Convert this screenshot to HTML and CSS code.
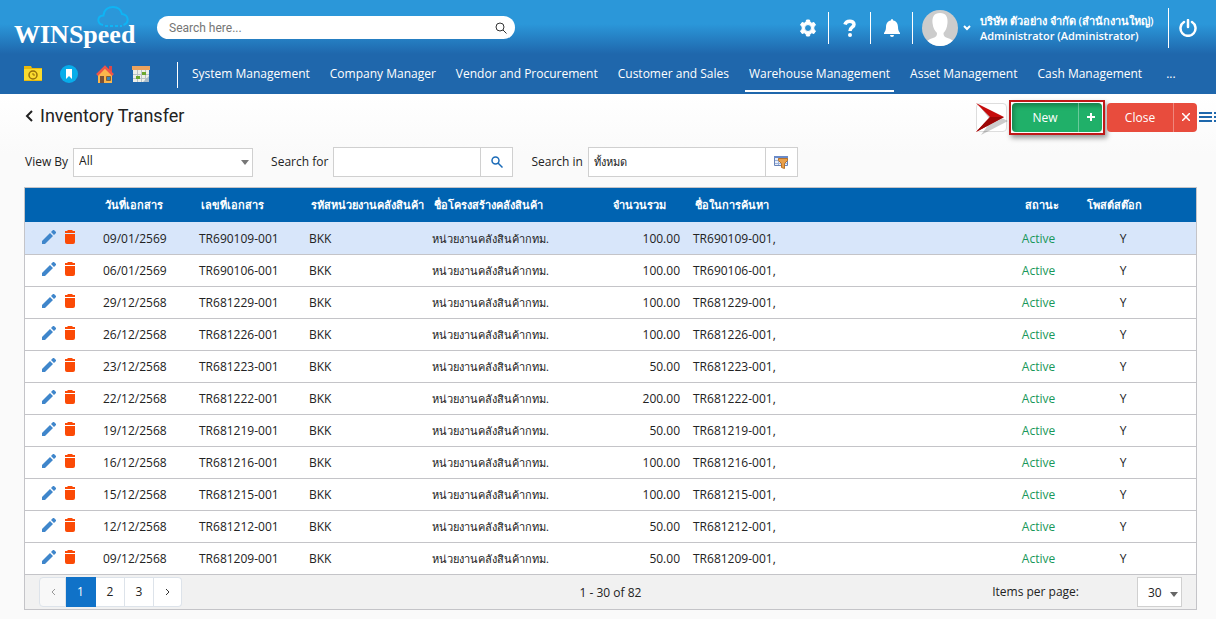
FILE: index.html
```html
<!DOCTYPE html>
<html lang="en">
<head>
<meta charset="utf-8">
<title>WINSpeed - Inventory Transfer</title>
<link rel="stylesheet" href="styles.css">
</head>
<body>
<svg class="sprite" aria-hidden="true">
  <symbol id="pencil" viewBox="0 0 14 14"><path d="M0 11 8 3l3 3-8 8H0zM9 2l2-2h1l2 2v1l-2 2z"/></symbol>
  <symbol id="trash" viewBox="0 0 12 14"><path d="M1 4h10v8q0 2-2 2H3q-2 0-2-2zM1 1h2l1-1h4l1 1h2v2H1z"/></symbol>
</svg>
<header class="top">
  <div class="bar">
    <a class="logo" href="#">
      <span>WINSpeed</span>
      <svg class="cloud" viewBox="0 0 32 22" fill="none" stroke="#0fb4f4" stroke-width="2"><path d="M6 19C0 18-.5 10 6.500 9.500 7 3 12 1 16 1c5 0 8 3 9 7 7 1 7.500 9 1.500 11"/><path d="M8 20h17" stroke-dasharray="3 2"/></svg>
    </a>
    <form class="search">
      <input type="search" placeholder="Search here..." aria-label="Search">
      <button type="button" aria-label="Search"><svg width="12" height="12" viewBox="0 0 12 12" fill="none" stroke="#333"><circle cx="5" cy="5" r="4"/><path d="m8 8 3.500 3.500"/></svg></button>
    </form>
    <div class="tools">
      <button class="tool" aria-label="Settings"><svg width="18" height="18" viewBox="0 0 18 18"><path fill="#fff" fill-rule="evenodd" stroke="#fff" stroke-linejoin="round" d="M7.500 1h3l.5 2.200 1.800 1 2.200-.7 1.500 2.600-1.700 1.600v2.600l1.700 1.600-1.500 2.600-2.200-.7-1.800 1-.5 2.200h-3L7 14.800l-1.800-1-2.200.7-1.500-2.600 1.700-1.600V7.700L1.500 6.100 3 3.500l2.200.7 1.800-1zM9 5.500a3.500 3.500 0 1 0 0 7 3.500 3.500 0 0 0 0-7z"/></svg></button>
      <button class="tool" aria-label="Help"><svg width="14" height="18" viewBox="0 0 14 18"><path fill="none" stroke="#fff" stroke-width="3.500" d="M2 5.500C3 1 11 1 11 5.500 11 8.500 7 8 7 12"/><circle cx="7" cy="16" r="2" fill="#fff"/></svg></button>
      <button class="tool" aria-label="Notifications"><svg width="16" height="18" viewBox="0 0 16 18" fill="#fff"><path d="M8 0q1.200 0 1.200 1.500C12.500 2 14 5 14 8c0 3 .8 4.500 2 6v1H0v-1c1.200-1.500 2-3 2-6 0-3 1.500-6 4.800-6.500Q6.800 0 8 0zM6 16h4q0 2-2 2t-2-2z"/></svg></button>
      <button class="user">
        <svg width="36" height="36" viewBox="0 0 36 36"><defs><clipPath id="round"><circle cx="18" cy="18" r="18"/></clipPath></defs><g clip-path="url(#round)"><path fill="#ccc" d="M0 0h36v36H0z"/><path fill="#fff" d="M18 3c6 0 8 4 7.500 10-.5 5-2 8-4 10 0 3 1 4 4 5 4 1 7 3 8 8H3c1-5 4-7 8-8 3-1 4-2 4-5-2-2-4-5-4.500-10C10 7 12 3 18 3z"/></g></svg>
        <svg width="8" height="6" viewBox="0 0 8 6" fill="none" stroke="#fff" stroke-width="2"><path d="m1 1 3 3 3-3"/></svg>
        <span class="who"><span class="thai">บริษัท ตัวอย่าง จำกัด (สำนักงานใหญ่)</span><span>Administrator (Administrator)</span></span>
      </button>
      <button class="power" aria-label="Log out"><svg width="18" height="18" viewBox="0 0 18 18" fill="none" stroke="#fff" stroke-width="2.500" stroke-linecap="round"><path d="M5 3a7.500 7.500 0 1 0 8 0M9 1v7"/></svg></button>
    </div>
  </div>
  <nav class="menu">
    <div class="quick">
      <a href="#" aria-label="Recent"><svg width="18" height="18" viewBox="0 0 18 18"><path fill="#e8b90c" d="M0 1h7l1 2h10v13H0z"/><path fill="#fadb2e" d="M0 4h18v11H0z"/><circle cx="9" cy="10" r="4" fill="none" stroke="#96700b" stroke-width="1.500"/><path d="M9 8v2h2" fill="none" stroke="#96700b"/></svg></a>
      <a href="#" aria-label="Bookmarks"><svg width="18" height="18" viewBox="0 0 18 18"><circle cx="9" cy="9" r="9" fill="#08adea"/><path fill="#fff" d="M6 4h6v10l-3-3-3 3z"/></svg></a>
      <a href="#" aria-label="Home"><svg width="18" height="18" viewBox="0 0 18 18"><path fill="#d9474a" d="M13 1h3v6h-3z"/><path fill="#fbb64b" d="M2 9l7-7 7 7v9H2z"/><path fill="none" stroke="#ee5548" stroke-width="2.500" d="m1 10 8-8 8 8"/><path fill="#7a5136" d="M4 11h4v7H4z"/><path fill="#3b82b4" stroke="#865f35" d="M10.500 11.500h4v4h-4z"/></svg></a>
      <a href="#" aria-label="Calendar"><svg width="18" height="18" viewBox="0 0 18 18"><path fill="#eef0e8" d="M1 1h16v16H1z"/><path fill="#eba35f" d="M0 1h18v4H0z"/><path stroke="#b9c3c6" d="M1 9.500h16M1 13.500h16M5.500 5v12M9.500 5v12M13.500 5v12"/><path fill="#6aa72e" d="M10 7h4v3h-4zM4 11h4v3H4z"/><path fill="#a9bccb" d="m11 17 6-6v6z"/></svg></a>
    </div>
    <ul class="links">
      <li><a href="#">System Management</a></li>
      <li><a href="#">Company Manager</a></li>
      <li><a href="#">Vendor and Procurement</a></li>
      <li><a href="#">Customer and Sales</a></li>
      <li><a class="active" href="#">Warehouse Management</a></li>
      <li><a href="#">Asset Management</a></li>
      <li><a href="#">Cash Management</a></li>
      <li><a href="#">...</a></li>
    </ul>
  </nav>
</header>
<main>
  <div class="head">
    <h1><svg width="8" height="12" viewBox="0 0 8 12" fill="none" stroke="#222" stroke-width="2"><path d="M7 1 2 6l5 5"/></svg>Inventory Transfer</h1>
    <div class="actions">
      <span class="slot"><svg class="pointer" width="36" height="38" viewBox="0 0 36 38"><path fill="#000" opacity=".2" d="m6 7 27 13L6 34l10-14z"/><path fill="#c60c0c" d="m1 2 28 14L1 31l14-15z"/><path fill="#9c0606" d="m1 31 28-15H15z"/></svg></span>
      <span class="frame"><button class="btn new"><span>New</span><span class="sign"><svg width="8" height="8" viewBox="0 0 8 8" stroke="#fff" stroke-width="2"><path d="M0 4h8M4 0v8"/></svg></span></button></span>
      <button class="btn close"><span>Close</span><span class="sign"><svg width="8" height="8" viewBox="0 0 8 8" stroke="#fff" stroke-width="1.500"><path d="m0 0 8 8M8 0 0 8"/></svg></span></button>
      <button class="more" aria-label="Panel"><svg width="17" height="10" viewBox="0 0 17 10" stroke="#1d67ac" stroke-width="2"><path d="M0 1h13M0 5h13M0 9h13M15 1h2M15 5h2M15 9h2"/></svg></button>
    </div>
  </div>
  <div class="filters">
    <label for="view">View By</label>
    <span class="pick view"><select id="view"><option>All</option></select><svg width="8" height="5" viewBox="0 0 8 5" fill="#777"><path d="M0 0h8L4 5z"/></svg></span>
    <label for="for">Search for</label>
    <span class="combo"><input id="for" class="for"><button aria-label="Find"><svg width="12" height="12" viewBox="0 0 12 12" fill="none" stroke="#1b6bb8" stroke-width="1.500"><circle cx="4.500" cy="4.500" r="3.500"/><path d="m7 7 4.500 4.500"/></svg></button></span>
    <label for="in">Search in</label>
    <span class="combo"><input id="in" class="in thai" value="ทั้งหมด"><button aria-label="Choose fields"><svg width="14" height="14" viewBox="0 0 14 14"><path fill="#e8eef8" stroke="#6682b8" d="M.5 1.500h13v9H.5z"/><path fill="#6a8bc9" d="M0 1h14v2H0z"/><path stroke="#9db1d8" d="M1 5.500h12M1 8.500h12M4.500 3v7"/><path fill="#e9a04a" stroke="#b8722a" d="M4.500 3.500h9v2l-3 3v5l-3-1v-4l-3-3z"/></svg></button></span>
  </div>
  <section class="grid">
    <table>
      <colgroup><col class="c-tool"><col class="c-date"><col class="c-no"><col class="c-code"><col class="c-name"><col class="c-sum"><col><col class="c-status"><col class="c-post"><col class="c-end"></colgroup>
      <thead><tr><th></th><th>วันที่เอกสาร</th><th>เลขที่เอกสาร</th><th>รหัสหน่วยงานคลังสินค้า</th><th>ชื่อโครงสร้างคลังสินค้า</th><th class="h-sum">จำนวนรวม</th><th>ชื่อในการค้นหา</th><th class="h-status">สถานะ</th><th>โพสต์สต๊อก</th><th></th></tr></thead>
      <tbody id="rows"></tbody>
    </table>
    <footer class="foot">
      <div class="pager">
        <button disabled aria-label="Previous"><svg width="4" height="6" viewBox="0 0 4 6" fill="none" stroke="#999"><path d="M4 0 1 3l3 3"/></svg></button><button class="on">1</button><button>2</button><button>3</button><button aria-label="Next"><svg width="4" height="6" viewBox="0 0 4 6" fill="none" stroke="#333"><path d="m0 0 3 3-3 3"/></svg></button>
      </div>
      <span class="count">1 - 30 of 82</span>
      <div class="size"><label for="size">Items per page:</label><span class="pick"><select id="size"><option>30</option></select><svg width="8" height="5" viewBox="0 0 8 5" fill="#666"><path d="M0 0h8L4 5z"/></svg></span></div>
    </footer>
  </section>
</main>
<script src="rows.js"></script>
</body>
</html>
```
FILE: rows.js
```js
const rows = [
  ['09/01/2569', 'TR690109-001', '100.00'],
  ['06/01/2569', 'TR690106-001', '100.00'],
  ['29/12/2568', 'TR681229-001', '100.00'],
  ['26/12/2568', 'TR681226-001', '100.00'],
  ['23/12/2568', 'TR681223-001', '50.00'],
  ['22/12/2568', 'TR681222-001', '200.00'],
  ['19/12/2568', 'TR681219-001', '50.00'],
  ['16/12/2568', 'TR681216-001', '100.00'],
  ['15/12/2568', 'TR681215-001', '100.00'],
  ['12/12/2568', 'TR681212-001', '50.00'],
  ['09/12/2568', 'TR681209-001', '50.00']
];
document.getElementById('rows').innerHTML = rows.map(([date, no, sum]) => `
<tr><td><div class="row-tools"><button aria-label="Edit ${no}"><svg width="14" height="14" fill="#3f86cb"><use href="#pencil"/></svg></button><button aria-label="Delete ${no}"><svg width="12" height="14" fill="#fb4a06"><use href="#trash"/></svg></button></div></td>
<td>${date}</td><td>${no}</td><td>BKK</td><td class="thai">หน่วยงานคลังสินค้ากทม.</td><td class="sum">${sum}</td><td>${no},</td><td class="mid active-state">Active</td><td class="mid">Y</td><td></td></tr>`).join('');
```
FILE: styles.css
```css
* { box-sizing: border-box; }
body {
  margin: 0;
  min-height: 100vh;
  background: #fafafa;
  color: #222;
  font: 12px/16px "Open Sans", "Noto Sans", sans-serif;
}
button, input, select { font: inherit; color: inherit; }
button { border: 0; padding: 0; background: none; cursor: pointer; }
a { color: inherit; text-decoration: none; }
svg { display: block; flex: none; }
.sprite { display: none; }
.thai { font-size: 11px; }

/* top bar */
.top { color: #fff; background: linear-gradient(#2b97d9 24px, #1f67ac 54px); }
.bar { display: flex; align-items: center; height: 55px; padding-left: 14px; }
.logo { position: relative; width: 143px; padding-top: 14px; font: bold 26px/30px "Liberation Serif", serif; }
.cloud { position: absolute; left: 83px; top: 0; width: 32px; height: 22px; }
.search { display: flex; align-items: center; width: 358px; height: 23px; padding: 0 8px 0 12px; border-radius: 12px; background: #fff; color: #333; }
.search input { flex: 1; min-width: 0; padding: 0; border: 0; outline: 0; background: none; font-family: Roboto, sans-serif; }
.search input::placeholder { color: #757575; }
.tools { display: flex; align-items: center; margin-left: auto; }
.tool { display: flex; align-items: center; justify-content: center; width: 42px; height: 32px; border-right: 1px solid #fff; }
.user { display: flex; align-items: center; gap: 5px; padding-left: 9px; text-align: left; }
.who { display: flex; flex-direction: column; width: 192px; padding-left: 4px; font-weight: 600; line-height: 15px; white-space: nowrap; }
.who > span { font-size: 11px; }
.power { display: flex; align-items: center; justify-content: center; width: 48px; padding-right: 10px; height: 40px; border-left: 1px solid #fff; }

/* main menu */
.menu { display: flex; align-items: center; height: 39px; padding-left: 24px; }
.quick { display: flex; gap: 18px; width: 154px; height: 26px; align-items: center; padding-bottom: 2px; border-right: 1px solid #fff; }
.links { display: flex; align-self: stretch; gap: 12px; margin: 0 0 0 10px; padding: 0; list-style: none; white-space: nowrap; }
.links a { display: block; height: 37px; padding: 11px 4px 0; font-weight: 500; }
.links a.active { border-bottom: 2px solid #fff; }
.links li:last-child { padding-left: 4px; }

/* page head */
main { background: linear-gradient(#fff, #fafafa 60px); }
.head { display: flex; align-items: center; justify-content: space-between; height: 48px; padding: 0 0 2px 25px; }
h1 { display: flex; align-items: center; gap: 7px; margin: 0 0 2px; font: 18px/24px Roboto, sans-serif; }
.actions { display: flex; align-items: center; }
.slot { position: relative; width: 31px; height: 29px; border: 1px solid #ddd; border-radius: 4px; background: #fff; }
.pointer { position: absolute; left: -2px; top: -3px; }
.frame { margin: 0 2px; padding: 1px; border: 2px solid #c01818; box-shadow: 2px 3px 5px #0006; }
.btn { display: flex; width: 90px; height: 29px; border-radius: 4px; color: #fff; line-height: 29px; }
.btn > span:first-child { flex: 1; }
.sign { display: flex; align-items: center; justify-content: center; width: 24px; height: 29px; border-left: 1px solid #fff5; }
.new { background: #20b069; box-shadow: inset 2px 3px 4px #0004; }
.close { background: #e84c3d; }
.more { margin-left: 2px; }

/* filters */
.filters { display: flex; align-items: center; height: 40px; padding-left: 25px; }
.filters label { margin-right: 5px; }
.pick { position: relative; display: block; }
.pick select { width: 100%; height: 100%; padding: 0 5px; border: 1px solid #d0d0d0; border-radius: 0; background: #fff; appearance: none; }
.pick svg { position: absolute; right: 4px; top: 12px; pointer-events: none; }
.view { width: 180px; height: 29px; margin-right: 18px; }
.view select { padding-bottom: 3px; }
.combo { display: flex; height: 30px; margin-right: 18px; border: 1px solid #d0d0d0; background: #fff; }
.combo input { width: 146px; padding: 0 5px; border: 0; outline: 0; background: none; }
.combo .in { width: 176px; }
.combo button { display: flex; align-items: center; justify-content: center; width: 32px; border-left: 1px solid #d0d0d0; }

/* grid */
.grid { margin: 5px 19px 9px 24px; border: 1px solid #c4c4c8; }
table { width: 100%; table-layout: fixed; border-collapse: collapse; }
.c-tool { width: 70px; } .c-date { width: 96px; } .c-no { width: 110px; } .c-code { width: 123px; }
.c-name { width: 182px; } .c-sum { width: 79px; } .c-status { width: 77px; } .c-post { width: 92px; } .c-end { width: 27px; }
th { height: 34px; padding: 0 0 0 10px; background: #0063b1; color: #fff; font-size: 11px; font-weight: 600; text-align: left; white-space: nowrap; }
td { height: 32px; padding: 2px 5px 0 8px; background: #fff; border-bottom: 1px solid #c4c4c8; white-space: nowrap; }
tbody tr:first-child td { background: #d8e6fa; }
.h-sum { padding-left: 7px; }
.h-status { padding-left: 25px; }
td.mid { padding-left: 0; padding-right: 0; text-align: center; }
.sum { text-align: right; }
.active-state { color: #18975a; }
.row-tools { display: flex; gap: 8px; padding: 0 0 4px 9px; }

/* pager */
.foot { display: grid; grid-template-columns: 1fr auto 1fr; align-items: center; height: 34px; padding: 0 14px; background: #f1f1f1; }
.pager { display: flex; }
.pager button { display: flex; align-items: center; justify-content: center; width: 29px; height: 30px; border: 1px solid #dde3ea; border-left: 0; background: #fff; }
.pager button:first-child { width: 27px; border-left: 1px solid #dde3ea; border-radius: 4px 0 0 4px; background: #f8f8f8; }
.pager button:last-child { width: 28px; border-radius: 0 4px 4px 0; }
.pager .on { width: 30px; border-color: #1072c8; background: #1072c8; color: #fff; }
.count { padding-top: 3px; }
.size { display: flex; align-items: center; justify-content: flex-end; gap: 58px; }
.size .pick { width: 45px; height: 30px; }
.size select { padding: 3px 8px 0 10px; }
.size .pick svg { top: 15px; }
```
